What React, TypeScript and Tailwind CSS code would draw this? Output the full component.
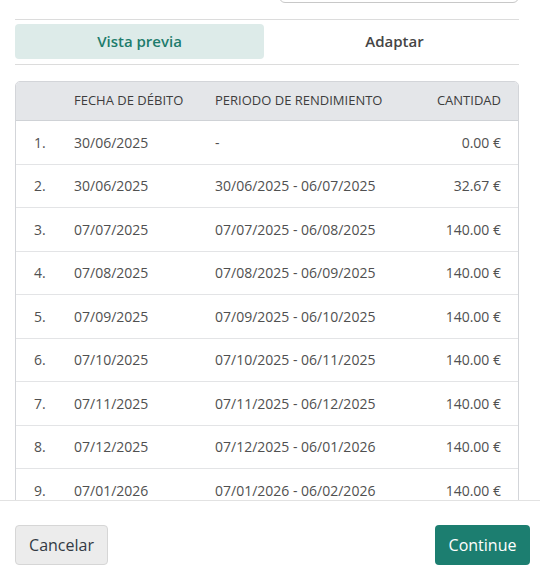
const rows = [
  { n: '1.', date: '30/06/2025', period: '-', amount: '0.00 €' },
  { n: '2.', date: '30/06/2025', period: '30/06/2025 - 06/07/2025', amount: '32.67 €' },
  { n: '3.', date: '07/07/2025', period: '07/07/2025 - 06/08/2025', amount: '140.00 €' },
  { n: '4.', date: '07/08/2025', period: '07/08/2025 - 06/09/2025', amount: '140.00 €' },
  { n: '5.', date: '07/09/2025', period: '07/09/2025 - 06/10/2025', amount: '140.00 €' },
  { n: '6.', date: '07/10/2025', period: '07/10/2025 - 06/11/2025', amount: '140.00 €' },
  { n: '7.', date: '07/11/2025', period: '07/11/2025 - 06/12/2025', amount: '140.00 €' },
  { n: '8.', date: '07/12/2025', period: '07/12/2025 - 06/01/2026', amount: '140.00 €' },
  { n: '9.', date: '07/01/2026', period: '07/01/2026 - 06/02/2026', amount: '140.00 €' },
];

const cols = 'grid grid-cols-[40px_141px_1fr_auto] items-center pl-[18px] pr-[17px]';

const App = () => {
  return (
    <div className="w-[540px] h-[579px] flex flex-col bg-white font-['Open_Sans',sans-serif] overflow-hidden">
      <div className="h-[500px] shrink-0 overflow-hidden pl-[15px] pr-[21px]">
        {/* Tail of the search input above */}
        <div className="ml-auto w-[240px] h-[40px] -mt-[37px] border border-[#c8c8c8] rounded-md" />

        <div className="mt-[16px] border-t border-[#dcdcdc]" />

        {/* Tabs */}
        <div className="mt-[4px] grid grid-cols-2 gap-1.5 h-[35px]">
          <button className="rounded-[4px] bg-[#ddebe9] text-[#1d7c6c] text-[15px] font-semibold">
            Vista previa
          </button>
          <button className="text-[#454545] text-[15px] font-semibold">Adaptar</button>
        </div>

        <div className="mt-[5px] border-t border-[#dcdcdc]" />

        {/* Table */}
        <div className="mt-[16px] border border-[#d3d5d9] rounded-t-[5px] overflow-hidden">
          <div className={`${cols} h-[39px] bg-[#e4e6e9] border-b border-[#cfd2d6] text-[13px] text-[#3d3d3d]`}>
            <span />
            <span>FECHA DE DÉBITO</span>
            <span>PERIODO DE RENDIMIENTO</span>
            <span className="text-right">CANTIDAD</span>
          </div>
          {rows.map((r) => (
            <div
              key={r.n}
              className={`${cols} h-[43.5px] border-b border-[#e3e4e6] text-[14px] text-[#505050]`}
            >
              <span>{r.n}</span>
              <span>{r.date}</span>
              <span>{r.period}</span>
              <span className="text-right">{r.amount}</span>
            </div>
          ))}
        </div>
      </div>

      {/* Footer */}
      <div className="flex-1 border-t border-[#e2e2e2] flex items-start justify-between pl-[15px] pr-[10px] pt-[24px]">
        <button className="h-[40px] w-[93px] rounded-[4px] border border-[#d6d6d6] bg-[#ececec] text-[16px] text-[#333a44]">
          Cancelar
        </button>
        <button className="h-[40px] w-[95px] rounded-[4px] bg-[#1c7e70] text-[16px] text-white">
          Continue
        </button>
      </div>
    </div>
  );
};

export default App;
